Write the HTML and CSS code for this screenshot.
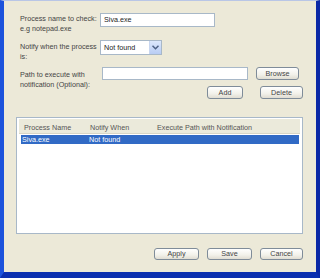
FILE: index.html
```html
<!DOCTYPE html>
<html>
<head>
<meta charset="utf-8">
<link rel="stylesheet" href="styles.css">
</head>
<body>
<div class="window">
  <div class="form">
    <div class="row row1">
      <div class="label">Process name to check:<br>e.g notepad.exe</div>
      <div class="input name-input">Siva.exe</div>
    </div>
    <div class="row row2">
      <div class="label lbl2">Notify when the process<br>is:</div>
      <div class="select">
        <span class="select-text">Not found</span>
        <span class="select-btn"><svg width="7" height="5" viewBox="0 0 7 5"><path d="M0.5 0.8 L3.5 3.8 L6.5 0.8" fill="none" stroke="#4d6185" stroke-width="1.5"/></svg></span>
      </div>
    </div>
    <div class="row row3">
      <div class="label lbl3">Path to execute with<br>notification (Optional):</div>
      <div class="input path-input"></div>
      <div class="btn btn-browse">Browse</div>
    </div>
    <div class="row row4">
      <div class="btn btn-add">Add</div>
      <div class="btn btn-delete">Delete</div>
    </div>
  </div>
  <div class="list">
    <div class="list-head">
      <div class="col c1">Process Name</div>
      <div class="col c2">Notify When</div>
      <div class="col c3">Execute Path with Notification</div>
    </div>
    <div class="list-row selected">
      <div class="col c1">Siva.exe</div>
      <div class="col c2">Not found</div>
      <div class="col c3"></div>
    </div>
  </div>
  <div class="footer">
    <div class="btn btn-foot">Apply</div>
    <div class="btn btn-foot">Save</div>
    <div class="btn btn-foot btn-cancel">Cancel</div>
  </div>
</div>
</body>
</html>
```

FILE: styles.css
```css
html, body {
  margin: 0;
  padding: 0;
  background: #0b2fb0;
}
.window {
  width: 320px;
  height: 278px;
  box-sizing: border-box;
  background: #ECE9D8;
  border-left: 4px solid #1c52dc;
  border-right: 4px solid #0a28a6;
  border-top: 1px solid #b9c6e6;
  border-bottom: 6px solid #0b2fb0;
  font-family: "Liberation Sans", Arial, sans-serif;
  font-size: 7.2px;
  color: #444;
  display: flex;
  flex-direction: column;
}
.form {
  padding-left: 16px;
  padding-top: 12px;
}
.row {
  display: flex;
  align-items: flex-start;
}
.row1 { height: 27px; }
.row2 { height: 27px; }
.row3 { height: 19px; }
.row4 { height: 13px; padding-left: 187px; }
.label {
  width: 80px;
  line-height: 10px;
  padding-top: 1px;
}
.lbl2 {
  padding-top: 2px;
}
.lbl3 {
  padding-top: 3px;
  width: 82px;
}
.input {
  background: #fff;
  border: 1px solid #a8b8c8;
  box-sizing: border-box;
  height: 14px;
  line-height: 12px;
  padding-left: 3px;
  color: #222;
}
.name-input {
  width: 115px;
}
.select {
  width: 62px;
  height: 15px;
  box-sizing: border-box;
  background: #fff;
  border: 1px solid #a8b8c8;
  display: flex;
  align-items: stretch;
}
.select-text {
  flex: 1;
  line-height: 13px;
  padding-left: 3px;
  color: #222;
}
.select-btn {
  width: 11px;
  background: linear-gradient(#dce8fc, #b8ccf4);
  border-left: 1px solid #c8d6f0;
  display: flex;
  align-items: center;
  justify-content: center;
}
.path-input {
  width: 146px;
  height: 13px;
}
.btn {
  box-sizing: border-box;
  height: 13px;
  border: 1px solid #7f8c99;
  border-radius: 3px;
  background: linear-gradient(#ffffff, #f2f1ea 60%, #e0ddd2);
  text-align: center;
  line-height: 11px;
  color: #444;
}
.btn-browse {
  width: 43px;
  margin-left: 8px;
}
.btn-add {
  width: 36px;
}
.btn-delete {
  width: 43px;
  margin-left: 17px;
}
.list {
  margin-top: 18px;
  margin-left: 12px;
  width: 287px;
  height: 117px;
  box-sizing: border-box;
  background: #fff;
  border: 1px solid #a8b8c8;
  padding: 1px 2px;
}
.list-head {
  display: flex;
  height: 14px;
  line-height: 17px;
  background: #ebeadb;
  border-bottom: 1px solid #d8d5c6;
  color: #555;
}
.list-row {
  display: flex;
  height: 9px;
  line-height: 9px;
}
.selected {
  background: #316ac5;
  color: #fff;
  margin-top: 1px;
  margin-left: 2px;
  margin-right: 1px;
}
.col {
  white-space: nowrap;
}
.list-head .c1 { width: 66px; padding-left: 5px; }
.list-head .c2 { width: 67px; }
.list-row .c1 { width: 67px; padding-left: 1px; }
.list-row .c2 { width: 67px; }
.footer {
  display: flex;
  justify-content: flex-end;
  gap: 8px;
  margin-top: 14px;
  padding-right: 13px;
}
.btn-foot {
  width: 45px;
  height: 12px;
  line-height: 10px;
}
.btn-cancel {
  width: 43px;
}
```
